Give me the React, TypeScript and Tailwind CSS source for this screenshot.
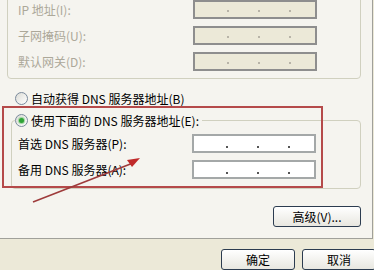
import React from 'react'

const font = "font-['Noto_Sans_CJK_SC','Noto_Sans',sans-serif]"

function IpBox({ disabled }: { disabled?: boolean }) {
  return (
    <div
      className={
        disabled
          ? 'flex h-[19px] w-[124px] shrink-0 items-end gap-[29px] border-2 border-[#8e8e8e] bg-[#ece9d8] pb-[5px] pl-[32px]'
          : 'flex h-[19px] w-[124px] shrink-0 items-end gap-[29px] border-2 border-[#a4a8a8] bg-white pb-[3px] pl-[32px]'
      }
    >
      <span className={disabled ? 'h-[2px] w-[2px] bg-[#b8b4a8]' : 'h-[2px] w-[2px] bg-[#555]'} />
      <span className={disabled ? 'h-[2px] w-[2px] bg-[#b8b4a8]' : 'h-[2px] w-[2px] bg-[#555]'} />
      <span className={disabled ? 'h-[2px] w-[2px] bg-[#b8b4a8]' : 'h-[2px] w-[2px] bg-[#555]'} />
    </div>
  )
}

function Radio({ checked }: { checked?: boolean }) {
  return (
    <span className="flex h-[13px] w-[13px] shrink-0 items-center justify-center rounded-full border border-[#7a8a9c] bg-gradient-to-br from-[#dcdcd6] to-white">
      {checked && <span className="h-[5px] w-[5px] rounded-full bg-[#2fa336] shadow-[0_0_1px_1px_#9ad39a]" />}
    </span>
  )
}

function XpButton({ label, w }: { label: string; w: string }) {
  return (
    <button
      className={`${w} h-[21px] shrink-0 rounded-[3px] border border-[#2c3c50] bg-gradient-to-b from-white to-[#e8e7e0] text-[12px] leading-none text-black`}
    >
      {label}
    </button>
  )
}

export default function App() {
  return (
    <div className={`relative h-[270px] w-[374px] overflow-hidden bg-[#ece9d8] text-[12px] leading-none ${font}`}>
      <div className="flex h-[239px] w-[373px] flex-col border-b border-r border-[#a0a09a] bg-[#f5f4ef] pl-[7px]">
        {/* IP group */}
        <div className="mt-[-12px] flex w-[354px] flex-col gap-[7px] rounded-[4px] border border-[#d0d0bf] pb-[7px] pl-[10px] pt-[11px]">
          {['IP 地址(I):', '子网掩码(U):', '默认网关(D):'].map((t) => (
            <div key={t} className="flex h-[19px] items-center">
              <span className="w-[175px] text-[#aca899]">{t}</span>
              <IpBox disabled />
            </div>
          ))}
        </div>

        <div className="ml-[8px] mt-[13px] flex h-[13px] items-center gap-[3px]">
          <Radio />
          <span>自动获得 DNS 服务器地址(B)</span>
        </div>

        {/* DNS group */}
        <div className="ml-[4px] mt-[15px] flex h-[69px] w-[350px] flex-col rounded-[4px] border border-[#d0d0bf]">
          <div className="-mt-[7px] ml-[3px] flex h-[13px] w-fit items-center gap-[3px] bg-[#f5f4ef] pr-[3px]">
            <Radio checked />
            <span>使用下面的 DNS 服务器地址(E):</span>
          </div>
          <div className="mt-[7px] flex flex-col gap-[7px] pl-[6px]">
            <div className="flex h-[19px] items-center">
              <span className="w-[174px]">首选 DNS 服务器(P):</span>
              <IpBox />
            </div>
            <div className="flex h-[19px] items-center">
              <span className="w-[174px]">备用 DNS 服务器(A):</span>
              <IpBox />
            </div>
          </div>
        </div>

        <div className="mt-[17px] flex w-[354px] justify-end">
          <XpButton label="高级(V)..." w="w-[88px]" />
        </div>
      </div>

      <div className="flex gap-[7px] pl-[221px] pt-[10px]">
        <XpButton label="确定" w="w-[74px]" />
        <XpButton label="取消" w="w-[74px]" />
      </div>

      {/* red annotation */}
      <div className="pointer-events-none absolute left-[2px] top-[106px] h-[82px] w-[321px] border-2 border-[#b54a4a]" />
      <svg className="pointer-events-none absolute left-0 top-0" width="374" height="270" viewBox="0 0 374 270">
        <line x1="33" y1="202" x2="133" y2="163" stroke="#9e3b3b" strokeWidth="1.6" />
        <polygon points="140,158 127,160 132,167" fill="#c02a2a" />
      </svg>
    </div>
  )
}
